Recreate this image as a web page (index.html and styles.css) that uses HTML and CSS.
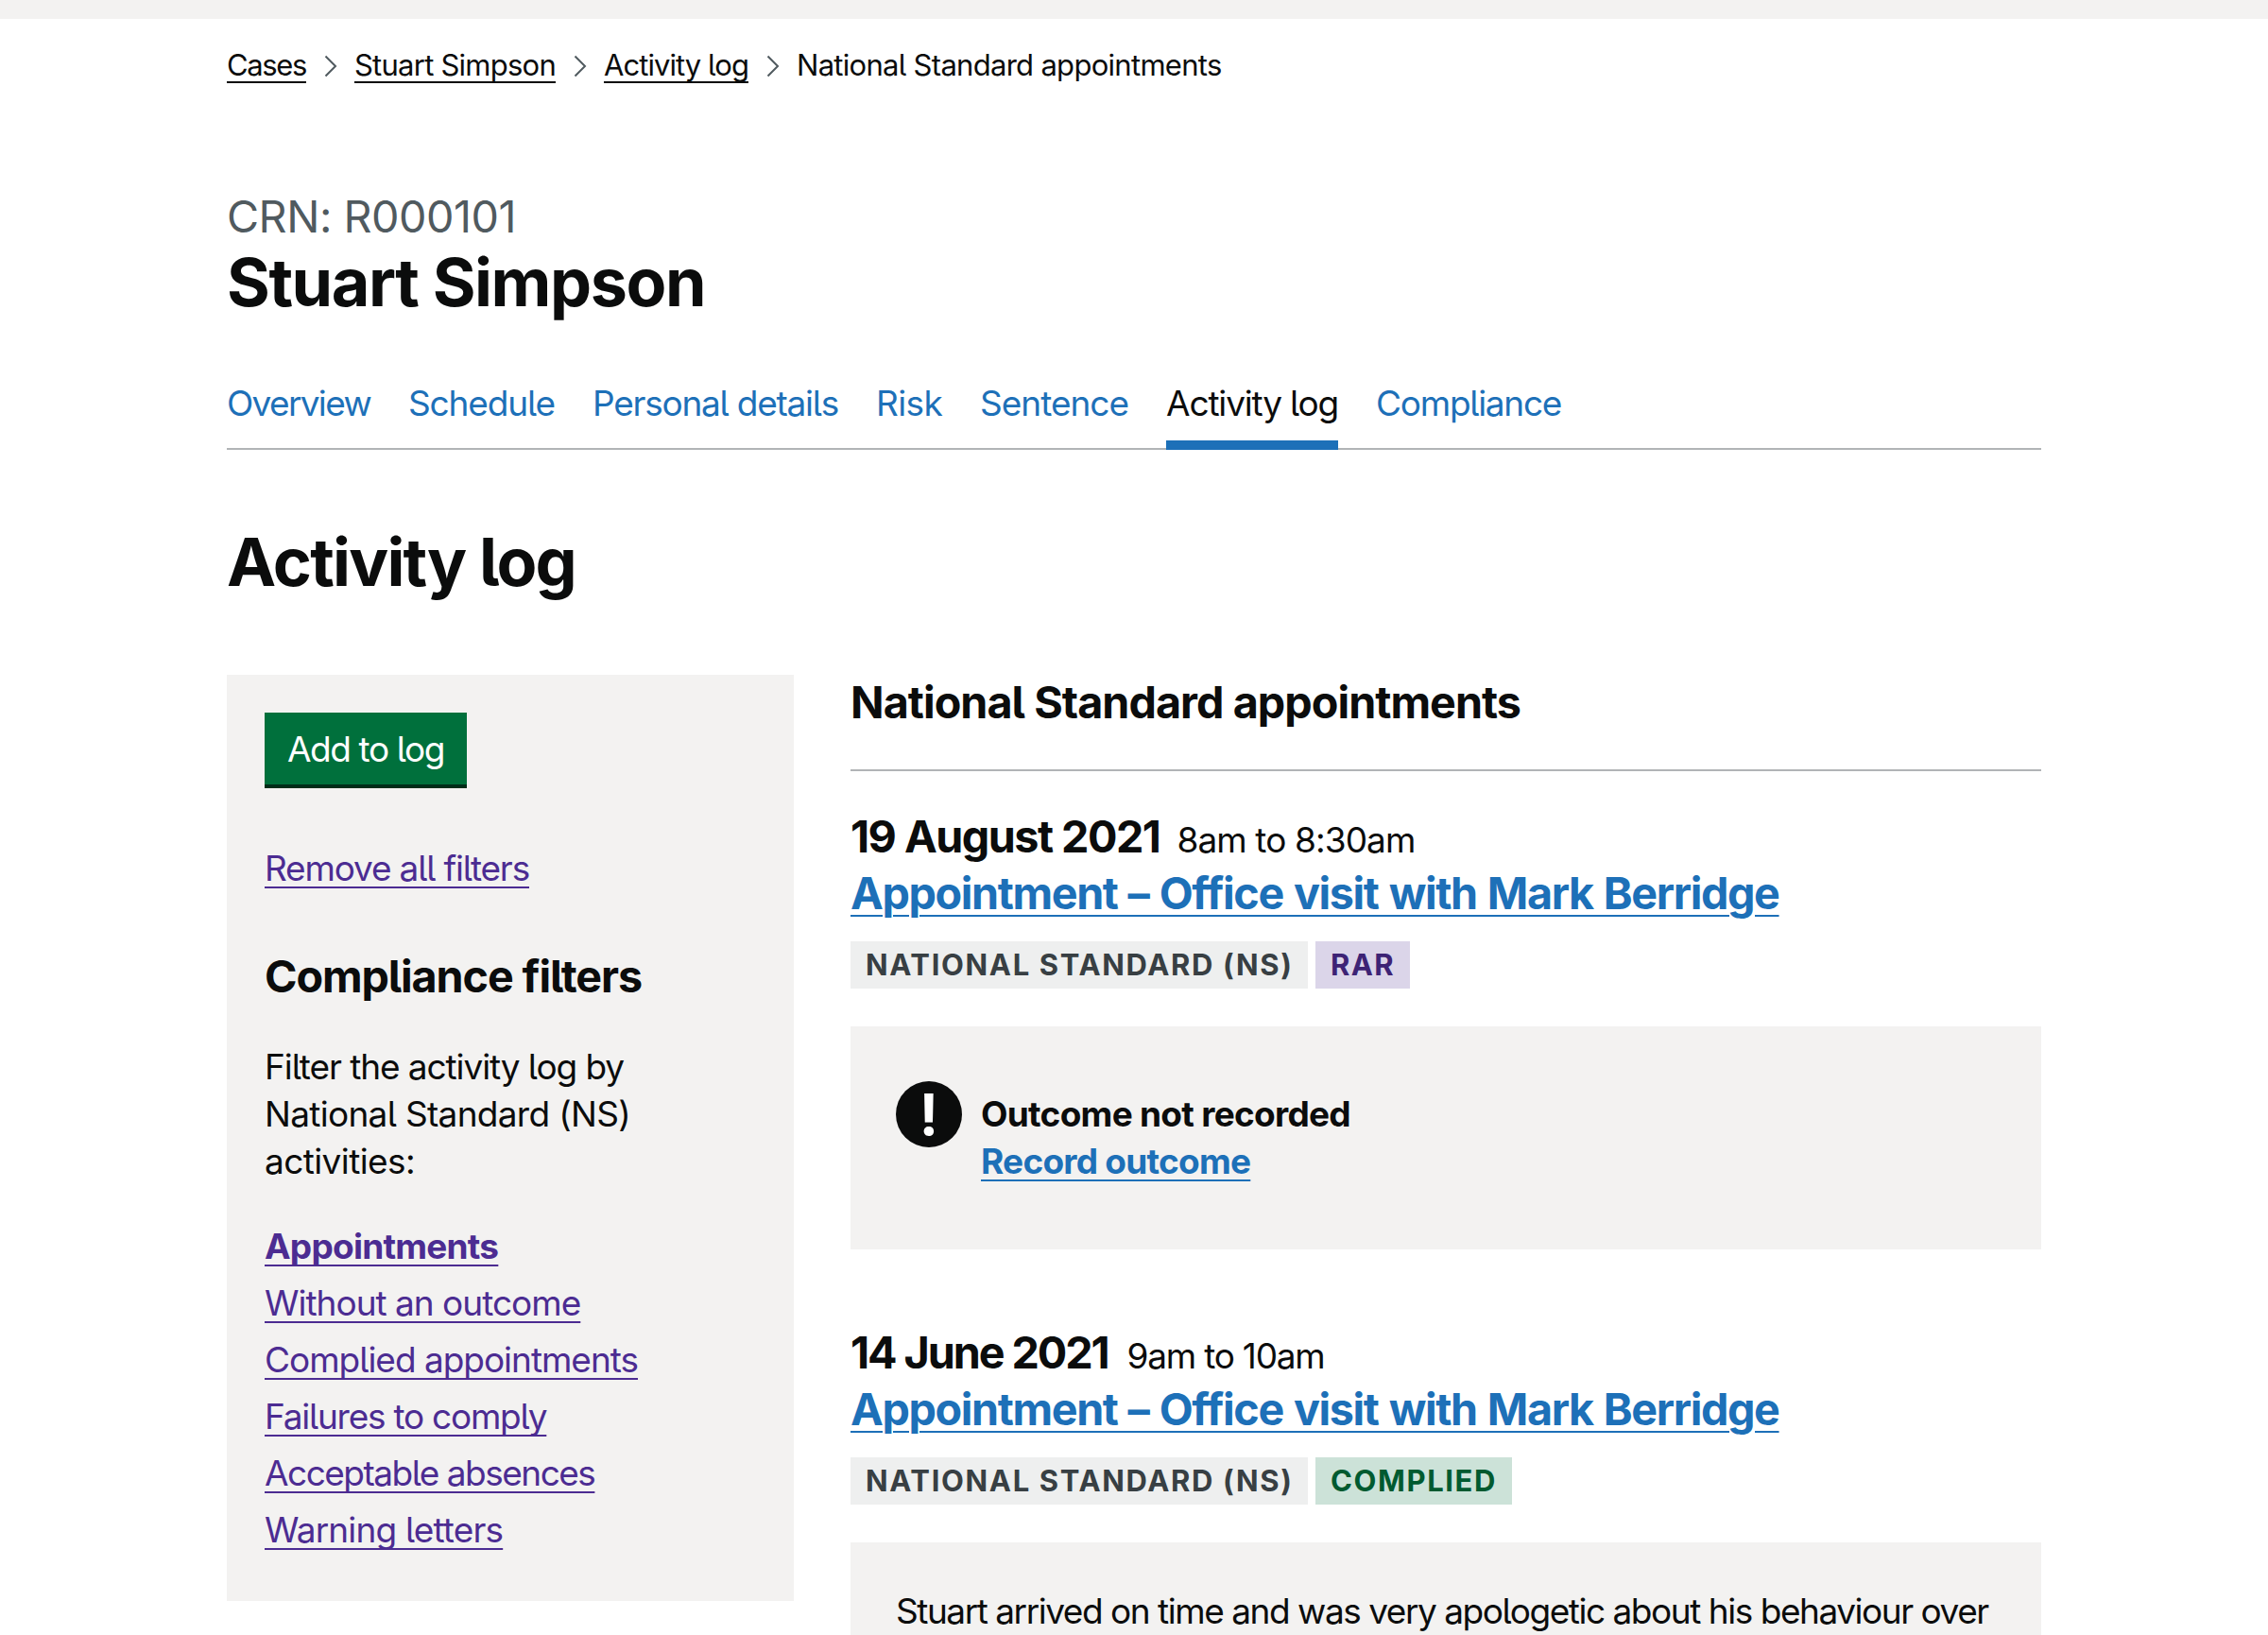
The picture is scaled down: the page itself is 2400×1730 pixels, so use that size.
FILE: index.html
```html
<!DOCTYPE html>
<html lang="en">
<head>
<meta charset="utf-8">
<title>National Standard appointments – Activity log</title>
<link rel="stylesheet" href="styles.css">
</head>
<body>
<div class="top-bar"></div>
<div class="container">
  <nav aria-label="Breadcrumb">
    <ol class="breadcrumbs">
      <li><a class="t-cases" href="#">Cases</a></li>
      <li><svg class="chevron" viewBox="0 0 14 24"><path d="M1.5 1.5 12 12 1.5 22.5"/></svg><a class="t-name" href="#">Stuart Simpson</a></li>
      <li><svg class="chevron" viewBox="0 0 14 24"><path d="M1.5 1.5 12 12 1.5 22.5"/></svg><a class="t-log" href="#">Activity log</a></li>
      <li><svg class="chevron" viewBox="0 0 14 24"><path d="M1.5 1.5 12 12 1.5 22.5"/></svg><span class="t-here">National Standard appointments</span></li>
    </ol>
  </nav>

  <header>
    <p class="crn">CRN: R000101</p>
    <h1 class="title">Stuart Simpson</h1>
  </header>

  <nav aria-label="Case">
    <ul class="tabs">
      <li><a class="t-overview" href="#">Overview</a></li>
      <li><a class="t-schedule" href="#">Schedule</a></li>
      <li><a class="t-personal" href="#">Personal details</a></li>
      <li><a class="t-risk" href="#">Risk</a></li>
      <li><a class="t-sentence" href="#">Sentence</a></li>
      <li><a class="t-activity current" href="#" aria-current="page">Activity log</a></li>
      <li><a class="t-compliance" href="#">Compliance</a></li>
    </ul>
  </nav>

  <h2 class="title section-title">Activity log</h2>

  <div class="columns">
    <aside class="sidebar">
      <a class="button" href="#">Add to log</a>
      <p class="remove"><a class="link visited t-remove" href="#">Remove all filters</a></p>
      <h3 class="heading filters-heading">Compliance filters</h3>
      <p class="intro"><span class="t-intro1">Filter the activity log by</span><br><span class="t-intro2">National Standard (NS)</span><br><span class="t-intro3">activities:</span></p>
      <ul class="filters">
        <li><a class="link visited selected t-appointments" href="#">Appointments</a></li>
        <li><a class="link visited t-without" href="#">Without an outcome</a></li>
        <li><a class="link visited t-complied" href="#">Complied appointments</a></li>
        <li><a class="link visited t-failures" href="#">Failures to comply</a></li>
        <li><a class="link visited t-absences" href="#">Acceptable absences</a></li>
        <li><a class="link visited t-warning" href="#">Warning letters</a></li>
      </ul>
    </aside>

    <main class="log">
      <h3 class="heading log-heading">National Standard appointments</h3>

      <section class="entry">
        <div class="when"><span class="heading date t-date1">19 August 2021</span><span class="t-time1">8am to 8:30am</span></div>
        <h4 class="heading entry-title"><a href="#">Appointment – Office visit with Mark Berridge</a></h4>
        <div class="tags">
          <strong class="tag tag-grey">NATIONAL STANDARD (NS)</strong>
          <strong class="tag tag-purple">RAR</strong>
        </div>
        <div class="panel warning">
          <span class="warning-icon" aria-hidden="true"><span>!</span></span>
          <div class="warning-text">
            <strong class="t-outcome">Outcome not recorded</strong><br>
            <a class="link t-record" href="#">Record outcome</a>
          </div>
        </div>
      </section>

      <section class="entry">
        <div class="when"><span class="heading date t-date2">14 June 2021</span><span class="t-time2">9am to 10am</span></div>
        <h4 class="heading entry-title"><a href="#">Appointment – Office visit with Mark Berridge</a></h4>
        <div class="tags">
          <strong class="tag tag-grey">NATIONAL STANDARD (NS)</strong>
          <strong class="tag tag-green">COMPLIED</strong>
        </div>
        <div class="panel notes">
          <p class="t-notes">Stuart arrived on time and was very apologetic about his behaviour over</p>
        </div>
      </section>
    </main>
  </div>
</div>
</body>
</html>
```
FILE: styles.css
```css
* { box-sizing: border-box; }

body {
  margin: 0;
  background: #fff;
  color: #0b0c0c;
  font-family: Inter, Roboto, "Liberation Sans", sans-serif;
  font-feature-settings: "cv05" 1;
  font-size: 37px;
  line-height: 50px;
  white-space: nowrap;
}

h1, h2, h3, h4, p, ul, ol { margin: 0; padding: 0; list-style: none; }

strong { font-weight: 700; }

a {
  color: #1d70b8;
  text-decoration-thickness: 2px;
  text-underline-offset: 6px;
}

.top-bar { height: 20px; background: #f3f2f1; }

.container { width: 1920px; margin: 0 auto; }

/* Breadcrumbs */
.breadcrumbs {
  display: flex;
  padding-top: 29px;
  font-size: 31px;
  line-height: 40px;
}
.breadcrumbs li { display: flex; align-items: center; }
.breadcrumbs a { color: #0b0c0c; text-decoration-skip-ink: none; }
.chevron {
  width: 14px;
  height: 24px;
  margin: 2px 18px 0 19px;
  fill: none;
  stroke: #505a5f;
  stroke-width: 2;
}

/* Case header */
.crn {
  margin-top: 109px;
  color: #505a5f;
  font-size: 46.7px;
  line-height: 62px;
  letter-spacing: -0.0103em;
}
.title {
  padding-top: 1px;
  font-size: 70px;
  line-height: 76px;
  font-weight: 700;
  letter-spacing: -0.0207em;
}

/* Case tabs */
.tabs {
  display: flex;
  gap: 40px;
  margin-top: 65px;
  box-shadow: inset 0 -2px #b1b4b6;
}
.tabs a { display: block; padding-bottom: 24px; text-decoration: none; }
.tabs .current { color: #0b0c0c; box-shadow: inset 0 -10px #1d70b8; }

.section-title { margin: 80px 0 81px; letter-spacing: -0.0258em; }

.columns {
  display: grid;
  grid-template-columns: 600px 1260px;
  column-gap: 60px;
  align-items: start;
}

.heading { font-size: 46.7px; line-height: 60px; font-weight: 700; }

.link { text-decoration-skip-ink: none; }
.visited { color: #4c2c92; }
.selected { font-weight: 700; }

/* Filters */
.sidebar { height: 980px; padding: 40px; background: #f3f2f1; }
.button {
  display: block;
  width: 214px;
  height: 80px;
  padding-left: 24px;
  background: #00703c;
  box-shadow: inset 0 -4px #002d18;
  color: #fff;
  line-height: 78px;
  letter-spacing: -0.0381em;
  text-decoration: none;
}
.remove { margin-top: 60px; }
.filters-heading { margin-top: 59px; letter-spacing: -0.0238em; }
.intro { margin-top: 41px; }
.filters { display: grid; row-gap: 10px; margin-top: 40px; }

/* Log entries */
.log-heading {
  padding-bottom: 42px;
  border-bottom: 2px solid #b1b4b6;
  line-height: 58px;
  letter-spacing: -0.0203em;
}
.entry { margin-top: 79px; }
.log-heading + .entry { margin-top: 39px; }
.when { display: flex; align-items: baseline; gap: 18px; }
.entry-title { letter-spacing: -0.0296em; word-spacing: 0.03em; }

.tags { display: flex; gap: 8px; margin-top: 21px; }
.tag {
  padding: 0 16px;
  font-size: 31px;
  line-height: 50px;
  letter-spacing: 0.0534em;
}
.tag-grey { width: 484px; background: #eeefef; color: #383f43; }
.tag-purple { background: #dbd5e9; color: #3d2375; letter-spacing: 0.0444em; }
.tag-green { background: #cce2d8; color: #005a30; letter-spacing: 0.0515em; }

.panel { margin-top: 40px; background: #f3f2f1; }
.warning { display: flex; gap: 20px; height: 236px; padding: 58px 48px 0; }
.warning-icon {
  display: grid;
  place-items: center;
  width: 70px;
  height: 70px;
  border-radius: 50%;
  background: #0b0c0c;
  color: #fff;
  font-size: 60px;
  font-weight: 700;
  line-height: 70px;
}
.warning-text { padding-top: 10px; font-weight: 700; }
.notes { height: 98px; padding: 48px 48px 0; }

/* Tracking, per label */
.t-cases { letter-spacing: -0.0443em; }
.t-name { letter-spacing: -0.0244em; }
.t-log { letter-spacing: -0.0302em; }
.t-here { letter-spacing: -0.0228em; }
.t-overview { letter-spacing: -0.0452em; }
.t-schedule { letter-spacing: -0.0307em; }
.t-personal { letter-spacing: -0.0335em; }
.t-risk { letter-spacing: -0.0176em; }
.t-sentence { letter-spacing: -0.0272em; }
.t-activity { letter-spacing: -0.0316em; }
.t-compliance { letter-spacing: -0.0345em; }
.t-remove { letter-spacing: -0.0316em; }
.t-intro1 { letter-spacing: -0.0292em; }
.t-intro2 { letter-spacing: -0.0187em; }
.t-intro3 { letter-spacing: -0.0161em; }
.t-appointments { letter-spacing: -0.0205em; }
.t-without { letter-spacing: -0.0268em; }
.t-complied { letter-spacing: -0.0275em; }
.t-failures { letter-spacing: -0.0334em; }
.t-absences { letter-spacing: -0.0407em; }
.t-warning { letter-spacing: -0.0228em; }
.t-date1 { letter-spacing: -0.0325em; }
.t-date2 { margin-right: 2px; letter-spacing: -0.0445em; }
.t-time1 { letter-spacing: -0.0245em; }
.t-time2 { letter-spacing: -0.0331em; }
.t-outcome { letter-spacing: -0.0194em; }
.t-record { letter-spacing: -0.0203em; }
.t-notes { letter-spacing: -0.0395em; }
```
